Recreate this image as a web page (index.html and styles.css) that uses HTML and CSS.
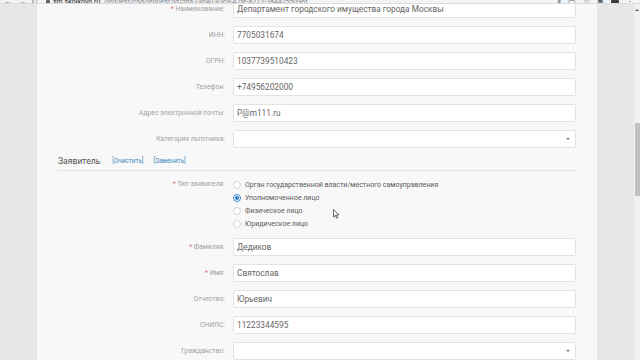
FILE: index.html
```html
<!DOCTYPE html>
<html lang="ru">
<head>
<meta charset="utf-8">
<title>Заявка</title>
<link rel="stylesheet" href="styles.css">
</head>
<body>
<div class="toolbar">
  <div class="nav"><span>←</span><span>→</span><span>C</span></div>
  <div class="url"><span class="lock"></span><span class="host">sm.skolkovo.ru</span><span class="path">/request/csd/request?id=f6a7-8f40-83c8-47fe-a212-3a44255096f</span></div>
  <div class="tb-icons"><span class="ic">⌕</span><span class="ic">▭</span><span class="ic">☆</span><span class="ic">✱</span><span class="avatar"></span><span class="ic">⋮</span></div>
</div>
<div class="viewport">
  <div class="gutter"></div>
  <main class="panel">
    <div class="form first">
      <div class="row"><label class="lbl"><span class="req">*</span> Наименование:</label><input class="inp" value="Департамент городского имущества города Москвы" readonly></div>
      <div class="row"><label class="lbl">ИНН:</label><input class="inp" value="7705031674" readonly></div>
      <div class="row"><label class="lbl">ОГРН:</label><input class="inp" value="1037739510423" readonly></div>
      <div class="row"><label class="lbl">Телефон:</label><input class="inp" value="+74956202000" readonly></div>
      <div class="row"><label class="lbl">Адрес электронной почты:</label><input class="inp" value="P@m111.ru" readonly></div>
      <div class="row"><label class="lbl">Категория льготника:</label><div class="inp select"><span class="caret"></span></div></div>
    </div>
    <div class="section-head">
      <span class="title">Заявитель</span>
      <a class="act">[Очистить]</a>
      <a class="act">[Заменить]</a>
    </div>
    <div class="radio-row">
      <label class="lbl"><span class="req">*</span> Тип заявителя:</label>
      <div class="options">
        <div class="opt"><span class="radio"></span>Орган государственной власти/местного самоуправления</div>
        <div class="opt"><span class="radio checked"></span>Уполномоченное лицо</div>
        <div class="opt"><span class="radio"></span>Физическое лицо</div>
        <div class="opt"><span class="radio"></span>Юридическое лицо</div>
      </div>
    </div>
    <div class="form">
      <div class="row"><label class="lbl"><span class="req">*</span> Фамилия:</label><input class="inp" value="Дедиков" readonly></div>
      <div class="row"><label class="lbl"><span class="req">*</span> Имя:</label><input class="inp" value="Святослав" readonly></div>
      <div class="row"><label class="lbl">Отчество:</label><input class="inp" value="Юрьевич" readonly></div>
      <div class="row"><label class="lbl">СНИЛС:</label><input class="inp" value="11223344595" readonly></div>
      <div class="row"><label class="lbl">Гражданство:</label><div class="inp select"><span class="caret"></span></div></div>
    </div>
  </main>
  <div class="gutter"></div>
  <div class="scrollbar"><span class="sb-arrow"></span><span class="thumb"></span></div>
</div>
<svg class="cursor" width="7" height="10" viewBox="0 0 7 10"><path d="M0.5 0.5 L0.5 8 L2.3 6.3 L3.6 9.2 L4.7 8.7 L3.5 5.9 L6 5.9 Z" fill="#fff" stroke="#222" stroke-width="0.7"/></svg>
</body>
</html>
```
FILE: styles.css
```css
* { box-sizing: border-box; }
html, body { margin: 0; padding: 0; }
body {
  width: 640px;
  height: 360px;
  overflow: hidden;
  position: relative;
  font-family: Roboto, "Liberation Sans", Arial, sans-serif;
  background: #e7e7e7;
}
.toolbar {
  height: 4px;
  background: #f1f3f4;
  display: flex;
  align-items: flex-end;
  overflow: hidden;
  color: #5f6368;
  font-size: 8px;
  line-height: 8px;
  border-bottom: 1px solid #dadce0;
}
.nav { display: flex; gap: 6px; padding-left: 4px; width: 46px; margin-bottom: -3px; }
.url { display: flex; align-items: flex-end; gap: 3px; flex: 1; margin-bottom: -3px; font-size: 7px; }
.lock { width: 4px; height: 6px; background: #5f6368; border-radius: 1px; }
.host { color: #202124; }
.path { color: #80868b; }
.tb-icons { display: flex; gap: 7px; padding-right: 6px; margin-bottom: -3px; align-items: flex-end; }
.avatar { width: 8px; height: 8px; border-radius: 50%; background: #3c3c3c; }
.viewport { display: flex; height: 356px; overflow: hidden; }
.gutter { width: 37px; background: #e7e7e7; flex: none; }
.panel { width: 560px; flex: none; background: #f8f8f8; }
.scrollbar { width: 6px; flex: none; background: #f1f1f1; display: flex; flex-direction: column; align-items: center; }
.sb-arrow { margin-top: 5px; width: 0; height: 0; border-left: 2px solid transparent; border-right: 2px solid transparent; border-bottom: 2px solid #555; }
.thumb { margin-top: 112px; width: 5px; height: 73px; background: #c1c1c1; }
.form { display: flex; flex-direction: column; gap: 8px; margin-top: 8px; }
.form.first { margin-top: -4px; }
.row { display: grid; grid-template-columns: 188px 343px; column-gap: 8px; align-items: center; }
.lbl { text-align: right; font-size: 6.8px; color: #a2a2a2; white-space: nowrap; }
.req { color: #e06a66; }
.inp {
  height: 18px;
  width: 343px;
  border: 1px solid #e3e3e3;
  border-radius: 2px;
  background: #fff;
  font-family: Roboto, "Liberation Sans", Arial, sans-serif;
  font-size: 8.3px;
  color: #666;
  padding: 0 3px;
  margin: 0;
  outline: none;
}
.select { display: flex; align-items: center; justify-content: flex-end; padding-right: 5px; }
.caret { width: 0; height: 0; border-left: 2px solid transparent; border-right: 2px solid transparent; border-top: 2px solid #777; }
.section-head {
  margin: 4px 21px 0 20px;
  height: 19px;
  border-bottom: 1px solid #e4e4e4;
  display: flex;
  align-items: center;
  gap: 10px;
  padding-left: 1px;
}
.title { font-size: 8.6px; color: #555; margin-right: 2px; }
.act { font-size: 6.3px; color: #3b86bd; }
.radio-row { display: grid; grid-template-columns: 188px 343px; column-gap: 8px; margin-top: 7px; }
.radio-row .lbl { line-height: 13px; }
.options { display: flex; flex-direction: column; }
.opt { height: 13px; display: flex; align-items: center; gap: 4px; font-size: 7px; color: #5a5a5a; }
.radio { width: 8px; height: 8px; border-radius: 50%; border: 1px solid #d6d6d6; background: #fff; display: flex; align-items: center; justify-content: center; }
.radio.checked { border-color: #3a8bd0; }
.radio.checked::after { content: ""; width: 4px; height: 4px; border-radius: 50%; background: #2f7fc4; }
.cursor { position: absolute; left: 333px; top: 209px; }
```
